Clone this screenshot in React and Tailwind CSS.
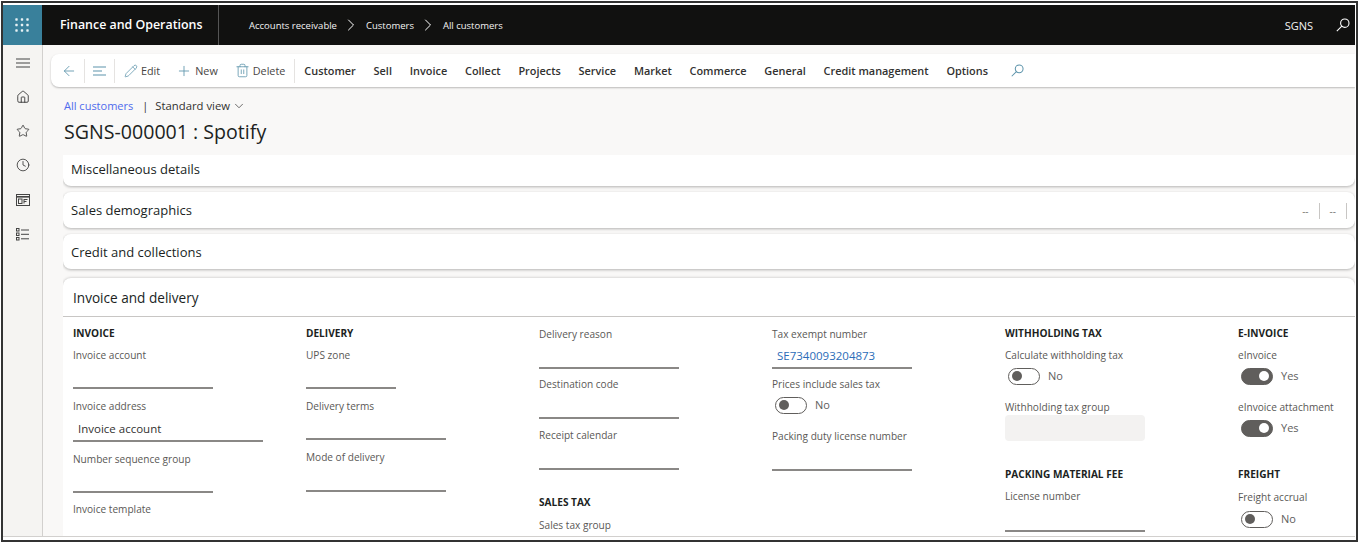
import React from "react";
import { ArrowLeft, Pencil, Plus, Trash2, Home, Star, Clock, ChevronDown, ChevronRight } from "lucide-react";

const Waffle = () => (
  <svg width="14" height="14" viewBox="0 0 14 14" fill="#e8f2f5">
    {[1.5, 7, 12.5].map((y) => [1.5, 7, 12.5].map((x) => <rect key={x + "-" + y} x={x - 1.2} y={y - 1.2} width="2.4" height="2.4" rx="0.6" />))}
  </svg>
);
const AlignIcon = () => (
  <svg width="15" height="12" viewBox="0 0 15 12" stroke="#5d94ab" strokeWidth="1.2" fill="none">
    <path d="M1 2h13M1 6h9M1 10h13" />
  </svg>
);
const Menu = () => (
  <svg width="14" height="10" viewBox="0 0 14 10" stroke="#444" strokeWidth="1.1" fill="none">
    <path d="M0 1h14M0 5h14M0 9h14" />
  </svg>
);
const Workspace = () => (
  <svg width="14" height="12" viewBox="0 0 14 12" fill="none" stroke="#444" strokeWidth="1">
    <rect x="0.5" y="0.5" width="13" height="11" />
    <path d="M0.5 2.8h13" strokeWidth="1.6" />
    <rect x="2.5" y="5" width="3.5" height="4.5" />
    <path d="M8 5.5h3.5M8 7.5h2.5M8 5v4.5" />
  </svg>
);
const ListIcon = () => (
  <svg width="13" height="13" viewBox="0 0 13 13" fill="none" stroke="#444" strokeWidth="1">
    <rect x="0.5" y="0.5" width="2.5" height="2.5" />
    <rect x="0.5" y="5" width="2.5" height="2.5" />
    <rect x="0.5" y="9.5" width="2.5" height="2.5" />
    <path d="M5 2h8M5 6.3h8M5 10.8h8" />
  </svg>
);
const SearchGlass = ({ size, color }) => (
  <svg width={size} height={size} viewBox="0 0 14 14" fill="none" stroke={color} strokeWidth="1.1">
    <circle cx="8.8" cy="5.2" r="4.2" />
    <path d="M5.8 8.2L0.8 13.2" />
  </svg>
);

const Head = ({ children, className = "" }) => (
  <div className={"h-[16px] leading-[16px] text-[10.1px] font-bold text-[#201f1e] whitespace-nowrap " + className}>{children}</div>
);
const Label = ({ children, className = "" }) => (
  <div className={"h-[16px] leading-[16px] text-[10.1px] font-medium text-[#5a5856] whitespace-nowrap " + className}>{children}</div>
);
const Line = ({ className = "" }) => <div className={"h-[2px] -mb-px bg-[#8a8886] " + className} />;
const Toggle = ({ on, label, className = "" }) => (
  <div className={"flex items-center h-[18px] " + className}>
    <div
      className={
        "ml-[3px] w-[32px] h-[17px] rounded-full flex items-center px-[3px] border " +
        (on ? "bg-[#605e5c] border-[#605e5c] justify-end" : "bg-white border-[#605e5c] justify-start")
      }
    >
      <div className={"w-[10px] h-[10px] rounded-full " + (on ? "bg-white" : "bg-[#605e5c]")} />
    </div>
    <span className="ml-[8px] pt-[1px] text-[11px] text-[#605e5c]">{label}</span>
  </div>
);

const TopCrumb = ({ children }) => <span className="pt-[2px] text-[9.5px] text-[#f3f3f3] whitespace-nowrap">{children}</span>;
const Sep = () => <div className="w-px h-[24px] bg-[#e5e3e1]" />;
const menu = ["Customer", "Sell", "Invoice", "Collect", "Projects", "Service", "Market", "Commerce", "General", "Credit management", "Options"];

const Card = ({ title, className = "", right }) => (
  <div className={"bg-white rounded-lg shadow-[0_1px_3px_rgba(0,0,0,0.28)] flex items-center justify-between pl-[8px] shrink-0 " + className}>
    <span className="text-[13px] font-medium text-[#201f1e]">{title}</span>
    {right}
  </div>
);

export default function App() {
  return (
    <div
      className="w-[1360px] h-[543px] overflow-hidden bg-white pt-[1px] pl-[1px] pr-[2px] pb-[1px]"
      style={{ fontFamily: '"Open Sans", "Noto Sans", sans-serif' }}
    >
      <div className="w-full h-full border-2 border-[#333333] flex flex-col pt-[2px] pr-[1px] pb-[3px] bg-white overflow-hidden">
        {/* top bar */}
        <div className="h-[40px] shrink-0 bg-[#111110] flex items-center">
          <div className="w-[39px] h-full bg-[#39809b] flex items-center justify-center pr-[2px]">
            <Waffle />
          </div>
          <div className="w-[177px] h-full flex items-center pl-[18px] pt-[1px] border-r border-[#555]">
            <span className="text-[12.4px] font-semibold text-white whitespace-nowrap">Finance and Operations</span>
          </div>
          <div className="flex items-center pl-[30px] gap-[4.5px]">
            <TopCrumb>Accounts receivable</TopCrumb>
            <ChevronRight size={20} strokeWidth={1.2} color="#fff" />
            <TopCrumb>Customers</TopCrumb>
            <ChevronRight size={20} strokeWidth={1.2} color="#fff" />
            <TopCrumb>All customers</TopCrumb>
          </div>
          <div className="ml-auto flex items-center pr-[5px]">
            <span className="pt-[3px] text-[11px] text-[#f3f3f3] mr-[23px]">SGNS</span>
            <SearchGlass size={14} color="#fff" />
          </div>
        </div>

        <div className="flex-1 flex min-h-0 border-b border-[#d2d0ce]">
          {/* sidebar */}
          <div className="w-[40px] shrink-0 bg-[#f5f4f2] border-r border-[#d2d0ce] flex flex-col items-center pt-[13px]">
            <Menu />
            <Home size={14} strokeWidth={1.5} color="#333" className="mt-[22px]" />
            <Star size={14} strokeWidth={1.4} color="#333" className="mt-[20px]" />
            <Clock size={14} strokeWidth={1.4} color="#333" className="mt-[20px]" />
            <div className="mt-[22px] flex"><Workspace /></div>
            <div className="mt-[22px] flex"><ListIcon /></div>
          </div>

          {/* main */}
          <div className="flex-1 min-w-0 bg-[#f9f8f7] flex flex-col pl-[8px] pt-[9px] overflow-hidden">
            {/* toolbar */}
            <div className="h-[33px] shrink-0 bg-white rounded-l-lg shadow-[0_1px_2px_rgba(0,0,0,0.25)] flex items-center text-[#323130]">
              <ArrowLeft size={16} strokeWidth={1.3} color="#5d94ab" className="ml-[10px]" />
              <div className="ml-[7px]"><Sep /></div>
              <div className="ml-[7px] flex"><AlignIcon /></div>
              <div className="ml-[7px]"><Sep /></div>
              <Pencil size={14} strokeWidth={1.3} color="#5d94ab" className="ml-[9px]" />
              <span className="ml-[3px] pt-[2px] text-[10.8px] text-[#484644]">Edit</span>
              <Plus size={16} strokeWidth={1.3} color="#5d94ab" className="ml-[16px]" />
              <span className="ml-[3px] pt-[2px] text-[10.8px] text-[#484644]">New</span>
              <Trash2 size={15} strokeWidth={1.3} color="#5d94ab" className="ml-[17px]" />
              <span className="ml-[3px] pt-[2px] text-[10.8px] text-[#484644]">Delete</span>
              <div className="ml-[9px]"><Sep /></div>
              <div className="ml-[9px] pt-[2px] flex items-center gap-[17.8px]">
                {menu.map((m) => (
                  <span key={m} className="text-[10.9px] font-semibold text-[#323130] whitespace-nowrap">{m}</span>
                ))}
              </div>
              <div className="ml-[23px] flex"><SearchGlass size={13} color="#5d94ab" /></div>
            </div>

            {/* breadcrumb */}
            <div className="ml-[13px] mt-[11px] h-[16px] flex items-center text-[11px] shrink-0">
              <span className="text-[#4f6bed]">All customers</span>
              <span className="ml-[9px] text-[#323130]">|</span>
              <span className="ml-[7px] text-[11.3px] text-[#323130]">Standard view</span>
              <ChevronDown size={14} strokeWidth={1.2} color="#323130" className="ml-[2px]" />
            </div>
            <div className="ml-[13px] mt-[4px] h-[28px] leading-[28px] text-[19.6px] text-[#201f1e] shrink-0">SGNS-000001 : Spotify</div>

            {/* cards */}
            <div className="ml-[12px] mt-[9px] flex-1 min-h-0 flex flex-col overflow-hidden">
              <Card title="Miscellaneous details" className="h-[31px] pb-[2px] rounded-t-none" />
              <Card
                title="Sales demographics"
                className="h-[36px] mt-[6px] pt-[2px]"
                right={
                  <div className="flex items-center text-[10px] text-[#7a7876] pr-[8px]">
                    <span>--</span>
                    <div className="w-px h-[16px] bg-[#c8c6c4] ml-[10px]" />
                    <span className="ml-[10px]">--</span>
                    <div className="w-px h-[16px] bg-[#c8c6c4] ml-[10px]" />
                  </div>
                }
              />
              <Card title="Credit and collections" className="h-[35px] mt-[6px] pt-[2px]" />

              <div className="mt-[9px] flex-1 min-h-0 bg-white rounded-t-lg shadow-[0_0_3px_rgba(0,0,0,0.25)] overflow-hidden">
                <div className="h-[39px] flex items-center pl-[10px] pt-[3px] border-b border-[#c8c6c4] text-[13.6px] font-medium text-[#201f1e]">
                  Invoice and delivery
                </div>
                <div className="flex pl-[10px] pt-[8px]">
                  <div className="w-[233px] shrink-0">
                    <Head>INVOICE</Head>
                    <Label className="mt-[6px]">Invoice account</Label>
                    <Line className="w-[140px] mt-[24px]" />
                    <Label className="mt-[10px]">Invoice address</Label>
                    <div className="h-[18px] leading-[18px] mt-[6px] ml-[5px] text-[11.5px] text-[#323130]">Invoice account</div>
                    <Line className="w-[190px] mt-[2px]" />
                    <Label className="mt-[10px]">Number sequence group</Label>
                    <Line className="w-[140px] mt-[24px]" />
                    <Label className="mt-[9px]">Invoice template</Label>
                  </div>
                  <div className="w-[233px] shrink-0">
                    <Head>DELIVERY</Head>
                    <Label className="mt-[6px]">UPS zone</Label>
                    <Line className="w-[90px] mt-[24px]" />
                    <Label className="mt-[10px]">Delivery terms</Label>
                    <Line className="w-[140px] mt-[24px]" />
                    <Label className="mt-[10px]">Mode of delivery</Label>
                    <Line className="w-[140px] mt-[25px]" />
                  </div>
                  <div className="w-[233px] shrink-0">
                    <Label className="mt-[1px]">Delivery reason</Label>
                    <Line className="w-[140px] mt-[25px]" />
                    <Label className="mt-[8px]">Destination code</Label>
                    <Line className="w-[140px] mt-[25px]" />
                    <Label className="mt-[9px]">Receipt calendar</Label>
                    <Line className="w-[140px] mt-[25px]" />
                    <Head className="mt-[25px]">SALES TAX</Head>
                    <Label className="mt-[7px]">Sales tax group</Label>
                  </div>
                  <div className="w-[233px] shrink-0">
                    <Label className="mt-[1px]">Tax exempt number</Label>
                    <div className="h-[18px] leading-[18px] mt-[5px] ml-[5px] text-[11.5px] text-[#2b6cb8]">SE7340093204873</div>
                    <Line className="w-[140px] mt-[2px]" />
                    <Label className="mt-[8px]">Prices include sales tax</Label>
                    <Toggle label="No" className="mt-[4px]" />
                    <Label className="mt-[14px]">Packing duty license number</Label>
                    <Line className="w-[140px] mt-[25px]" />
                  </div>
                  <div className="w-[233px] shrink-0">
                    <Head>WITHHOLDING TAX</Head>
                    <Label className="mt-[6px]">Calculate withholding tax</Label>
                    <Toggle label="No" className="mt-[4px]" />
                    <Label className="mt-[14px]">Withholding tax group</Label>
                    <div className="w-[140px] h-[26px] bg-[#f3f2f1] rounded-sm" />
                    <Head className="mt-[25px]">PACKING MATERIAL FEE</Head>
                    <Label className="mt-[6px]">License number</Label>
                    <Line className="w-[140px] mt-[26px]" />
                  </div>
                  <div className="w-[117px] shrink-0">
                    <Head>E-INVOICE</Head>
                    <Label className="mt-[6px]">eInvoice</Label>
                    <Toggle on label="Yes" className="mt-[4px]" />
                    <Label className="mt-[14px]">eInvoice attachment</Label>
                    <Toggle on label="Yes" className="mt-[4px]" />
                    <Head className="mt-[29px]">FREIGHT</Head>
                    <Label className="mt-[7px]">Freight accrual</Label>
                    <Toggle label="No" className="mt-[5px]" />
                  </div>
                </div>
              </div>
            </div>
          </div>
        </div>
      </div>
    </div>
  );
}
